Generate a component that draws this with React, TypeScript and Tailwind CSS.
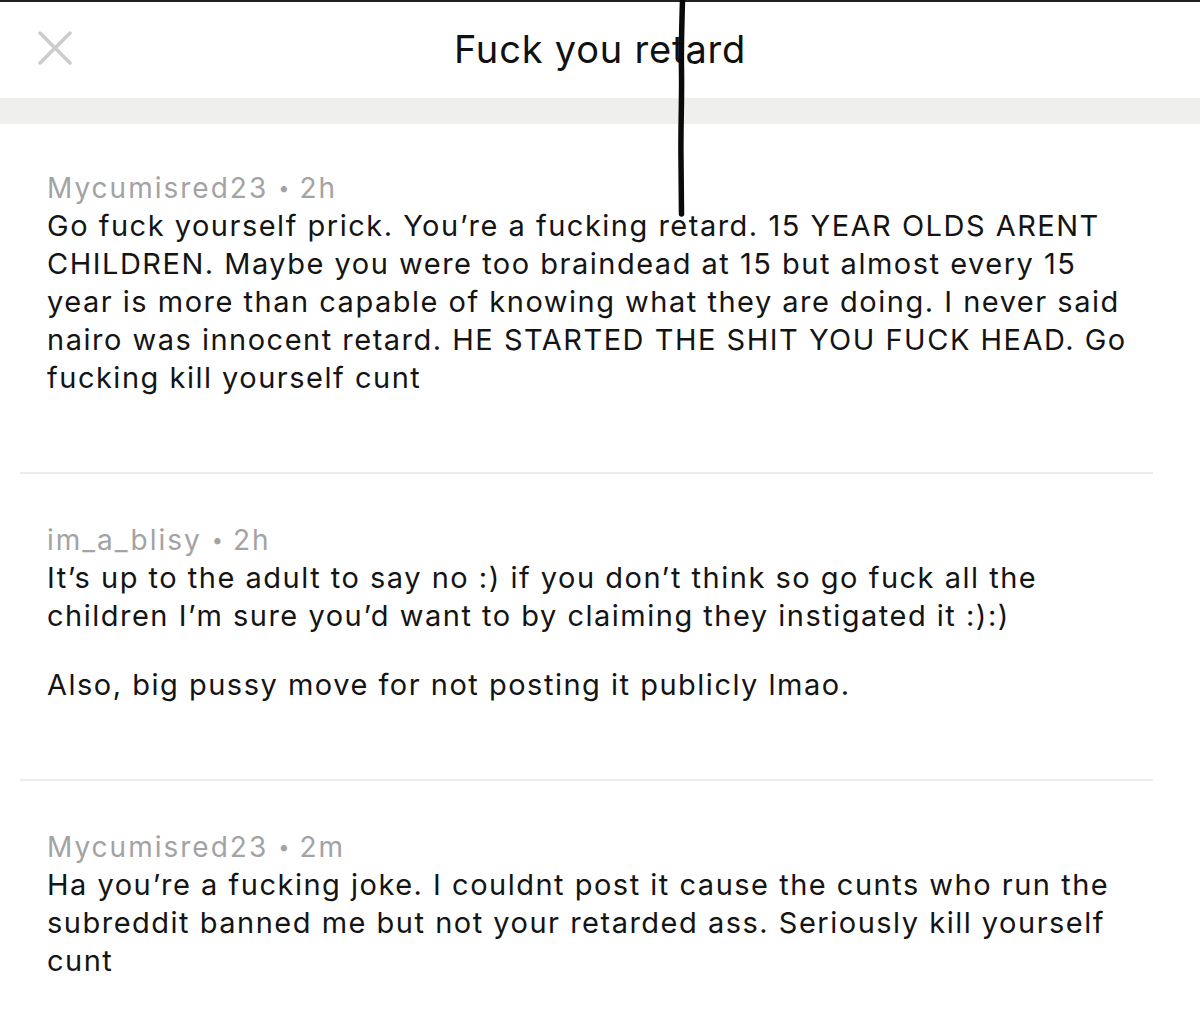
import React from "react";

const font = { fontFamily: 'Inter, "Liberation Sans", Arial, sans-serif' };

function Comment({
  user,
  time,
  paras,
  pt,
  pb,
  divider,
}: {
  user: string;
  time: string;
  paras: string[][];
  pt: string;
  pb: string;
  divider: boolean;
}) {
  return (
    <div>
      <div className={`px-[47px] ${pt} ${pb}`}>
        <div className="flex items-center gap-[10px] text-[28px] leading-[38px] text-[#a3a3a3] whitespace-nowrap tracking-[2px]">
          <span>{user}</span>
          <span className="text-[20px] tracking-normal">•</span>
          <span>{time}</span>
        </div>
        {paras.map((lines, i) => (
          <div key={i} className={i > 0 ? "mt-[31px]" : ""}>
            {lines.map((l, j) => (
              <div
                key={j}
                className="text-[29px] leading-[38px] text-[#141414] whitespace-nowrap tracking-[1.5px]"
              >
                {l}
              </div>
            ))}
          </div>
        ))}
      </div>
      {divider && <div className="mx-[20px] w-[1133px] h-[2px] bg-[#ececec]" />}
    </div>
  );
}

export default function App() {
  return (
    <div className="relative w-[1200px] h-[1022px] bg-white overflow-hidden" style={font}>
      <div className="h-[2px] bg-[#222]" />
      <div className="relative h-[96px] flex items-center justify-center">
        <svg
          className="absolute left-[38px] top-[29px]"
          width="34"
          height="34"
          viewBox="0 0 34 34"
        >
          <path d="M2 2 L32 32 M32 2 L2 32" stroke="#cccccc" strokeWidth="3.5" strokeLinecap="round" />
        </svg>
        <div className="text-[38px] text-[#111] -mt-[2px] tracking-[0.8px]">Fuck you retard</div>
      </div>
      <div className="h-[26px] bg-[#efefed]" />
      <Comment
        user="Mycumisred23"
        time="2h"
        pt="pt-[45px]"
        pb="pb-[75px]"
        divider
        paras={[
          [
            "Go fuck yourself prick. You’re a fucking retard. 15 YEAR OLDS ARENT",
            "CHILDREN. Maybe you were too braindead at 15 but almost every 15",
            "year is more than capable of knowing what they are doing. I never said",
            "nairo was innocent retard. HE STARTED THE SHIT YOU FUCK HEAD. Go",
            "fucking kill yourself cunt",
          ],
        ]}
      />
      <Comment
        user="im_a_blisy"
        time="2h"
        pt="pt-[47px]"
        pb="pb-[75px]"
        divider
        paras={[
          [
            "It’s up to the adult to say no :) if you don’t think so go fuck all the",
            "children I’m sure you’d want to by claiming they instigated it :):)",
          ],
          ["Also, big pussy move for not posting it publicly lmao."],
        ]}
      />
      <Comment
        user="Mycumisred23"
        time="2m"
        pt="pt-[47px]"
        pb="pb-[40px]"
        divider={false}
        paras={[
          [
            "Ha you’re a fucking joke. I couldnt post it cause the cunts who run the",
            "subreddit banned me but not your retarded ass. Seriously kill yourself",
            "cunt",
          ],
        ]}
      />
      <svg
        className="absolute left-[674px] top-0"
        width="16"
        height="220"
        viewBox="0 0 16 220"
      >
        <path
          d="M8.5 0 C8 20 7 45 7.5 70 C8 100 6.5 130 7 160 C7.2 185 7.5 200 7.5 214"
          stroke="#0a0a0a"
          strokeWidth="5.5"
          strokeLinecap="round"
          fill="none"
        />
      </svg>
    </div>
  );
}
